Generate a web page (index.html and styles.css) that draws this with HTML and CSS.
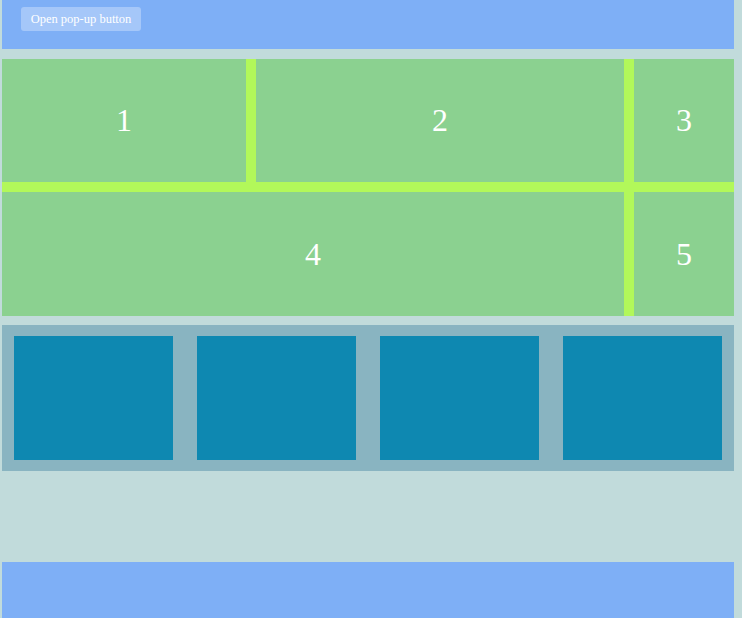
FILE: index.html
```html
<!DOCTYPE html>
<html lang="en">
<head>
    <meta charset="UTF-8">
    <title>Grid Layout</title>
    <link rel="stylesheet" href="styles.css">
</head>
<body>

<div class="page">
    <header class="top-bar">
        <button class="btn-popup">Open pop-up button</button>
    </header>

    <section class="grid">
        <div class="cell">1</div>
        <div class="cell">2</div>
        <div class="cell">3</div>
        <div class="cell cell-wide">4</div>
        <div class="cell">5</div>
    </section>

    <section class="tiles">
        <div class="tile"></div>
        <div class="tile"></div>
        <div class="tile"></div>
        <div class="tile"></div>
    </section>

    <div class="spacer"></div>

    <footer class="bottom-bar"></footer>
</div>

</body>
</html>
```

FILE: styles.css
```css
body { margin: 0; background-color: #c1dbdb; font-family: "Liberation Serif", "Times New Roman", serif; }
.page { margin: 0 8px 0 2px; }
.top-bar { background-color: #7eaff6; height: 49px; padding: 7px 0 0 19px; box-sizing: border-box; margin-bottom: 10px; }
.btn-popup { width: 120px; height: 24px; padding: 0; border: none; border-radius: 3px; background-color: rgba(255,255,255,0.3); color: white; font-family: inherit; font-size: 12.5px; cursor: pointer; }
.grid { display: grid; grid-template-columns: 244px 1fr 100px; grid-template-rows: 123px 124px; column-gap: 10px; row-gap: 10px; background-color: #b2f85a; margin-bottom: 9px; }
.cell { background-color: #8bd190; color: white; font-size: 32px; display: flex; align-items: center; justify-content: center; }
.cell-wide { grid-column: span 2; }
.tiles { background-color: #89b4c1; padding: 11px 12px; display: grid; grid-template-columns: repeat(4, 1fr); column-gap: 24px; }
.tile { background-color: #0e88b1; height: 124px; }
.spacer { height: 91px; }
.bottom-bar { background-color: #7eaff6; height: 60px; }
```
